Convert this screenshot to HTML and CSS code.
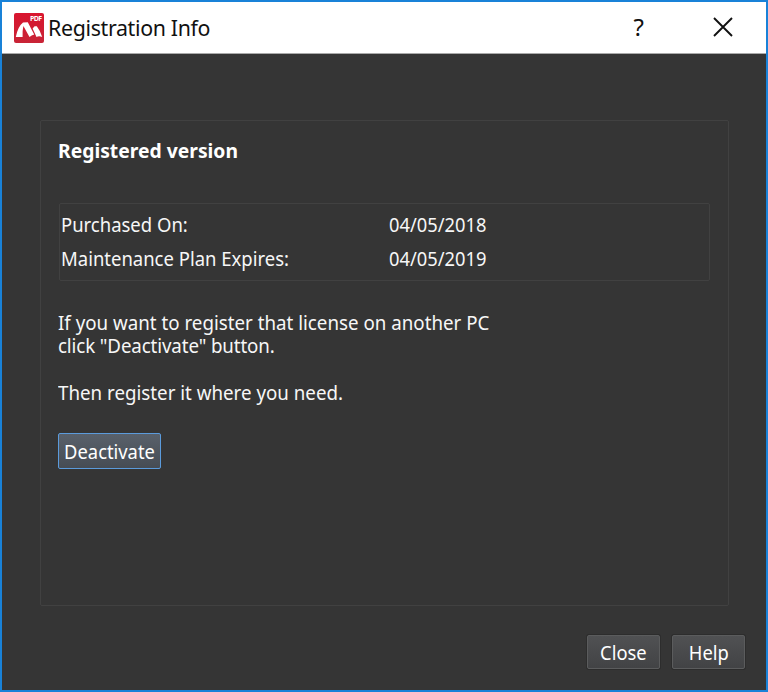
FILE: index.html
```html
<!DOCTYPE html>
<html lang="en">
<head>
<meta charset="utf-8">
<title>Registration Info</title>
<link rel="stylesheet" href="styles.css">
</head>
<body>
<div class="window">
  <header class="titlebar">
    <svg class="logo" viewBox="0 0 30 30" aria-hidden="true">
      <defs><linearGradient id="red" x1="0" y1="0" x2="0" y2="1"><stop offset="0" stop-color="#d9152f"/><stop offset="1" stop-color="#c82436"/></linearGradient></defs>
      <rect width="30" height="30" rx="2" fill="url(#red)"/>
      <path d="M1.8 24 Q4 13.5 9 9.6 L13.8 9.2 L20.2 21.5 Q17.5 22 15.5 24 L9.4 13 Q8.2 18 8.6 24 Z" fill="#fff"/>
      <path d="M18.6 15.5 L20.6 13.2 L22.8 13.2 Q26.5 18 28.2 24 Q25 22.6 22.5 24 Z" fill="#fff"/>
      <text class="logo-text" x="16" y="8.2" textLength="12">PDF</text>
    </svg>
    <h1 class="title">Registration Info</h1>
    <div class="controls">
      <span class="help-mark">?</span>
      <svg class="close-mark" viewBox="0 0 20 20"><path d="M1 1L19 19M19 1L1 19" stroke="#111" stroke-width="1.9" fill="none"/></svg>
    </div>
  </header>
  <main class="content">
    <section class="panel">
      <h2 class="heading">Registered version</h2>
      <dl class="details">
        <dt class="label">Purchased On:</dt><dd class="value">04/05/2018</dd>
        <dt class="label">Maintenance Plan Expires:</dt><dd class="value">04/05/2019</dd>
      </dl>
      <div class="note">
        <p>If you want to register that license on another PC</p>
        <p class="tight">click "Deactivate" button.</p>
      </div>
      <p class="note">Then register it where you need.</p>
      <button class="button primary"><span class="caption">Deactivate</span></button>
    </section>
    <footer class="actions">
      <button class="button"><span class="caption">Close</span></button>
      <button class="button"><span class="caption">Help</span></button>
    </footer>
  </main>
</div>
</body>
</html>
```
FILE: styles.css
```css
* { box-sizing: border-box; margin: 0; padding: 0; }
body { background: #353535; }
.window {
  width: 768px; height: 692px;
  border: 2px solid #1982d8;
  background: #353535;
  display: flex; flex-direction: column;
  font: 20px/23px "Noto Sans", sans-serif;
  color: #f7f7f7;
  white-space: nowrap;
}
.titlebar {
  height: 52px; flex: none;
  background: #fff; border-bottom: 1px solid #aaa;
  display: flex; align-items: center;
  padding: 0 33px 0 12px;
  color: #111;
}
.logo { width: 30px; height: 30px; margin-right: 4px; }
.logo-text { font: bold 7px "Open Sans", sans-serif; fill: #fff; }
.title {
  font: 22px/30px "Noto Sans", sans-serif; letter-spacing: -0.35px;
  padding-bottom: 1px;
  transform: scaleX(0.971); transform-origin: left;
}
.controls { margin-left: auto; display: flex; align-items: center; gap: 69px; padding-bottom: 2px; }
.help-mark { font-size: 24px; line-height: 30px; }
.close-mark { width: 20px; height: 20px; }
.content { flex: 1; padding: 66px 21px 0 38px; }
.panel {
  width: 689px; height: 486px;
  border: 1px solid #414141; border-radius: 2px;
  padding: 18px 18px 0 17px;
}
.heading {
  font-size: 20px; line-height: 24px; font-weight: 700; color: #fff;
  width: max-content;
  transform: scaleX(0.965); transform-origin: left;
}
.details {
  width: 651px; height: 78px; margin: 40px 0 0 1px;
  border: 1px solid #414141; border-radius: 2px;
  display: grid; grid-template-columns: 328px 1fr; grid-auto-rows: 34px;
  line-height: 34px; padding: 4px 1px;
}
.label, .value { width: max-content; transform-origin: left; }
.label { transform: scaleX(0.924); }
.value { transform: scaleX(0.915); }
.note {
  width: max-content; margin-top: 30px;
  transform: scaleX(0.937); transform-origin: left;
}
.note + .note { margin-top: 24px; }
.tight { letter-spacing: -0.13px; }
.button {
  font: inherit; color: #fff;
  height: 34px; width: 73px;
  border: 1px solid #5b5c5d; border-radius: 2px;
  background: linear-gradient(#505153, #424345);
  box-shadow: 0 0 0 1px #2d2d2d;
}
.caption { display: inline-block; transform: scaleX(0.917); }
.primary {
  display: block; width: 103px; height: 36px; margin-top: 29px;
  border-color: #5b9bdc; background: linear-gradient(#59616b, #464c54);
  box-shadow: none;
}
.actions { margin-top: 29px; display: flex; justify-content: flex-end; gap: 12px; }
```
